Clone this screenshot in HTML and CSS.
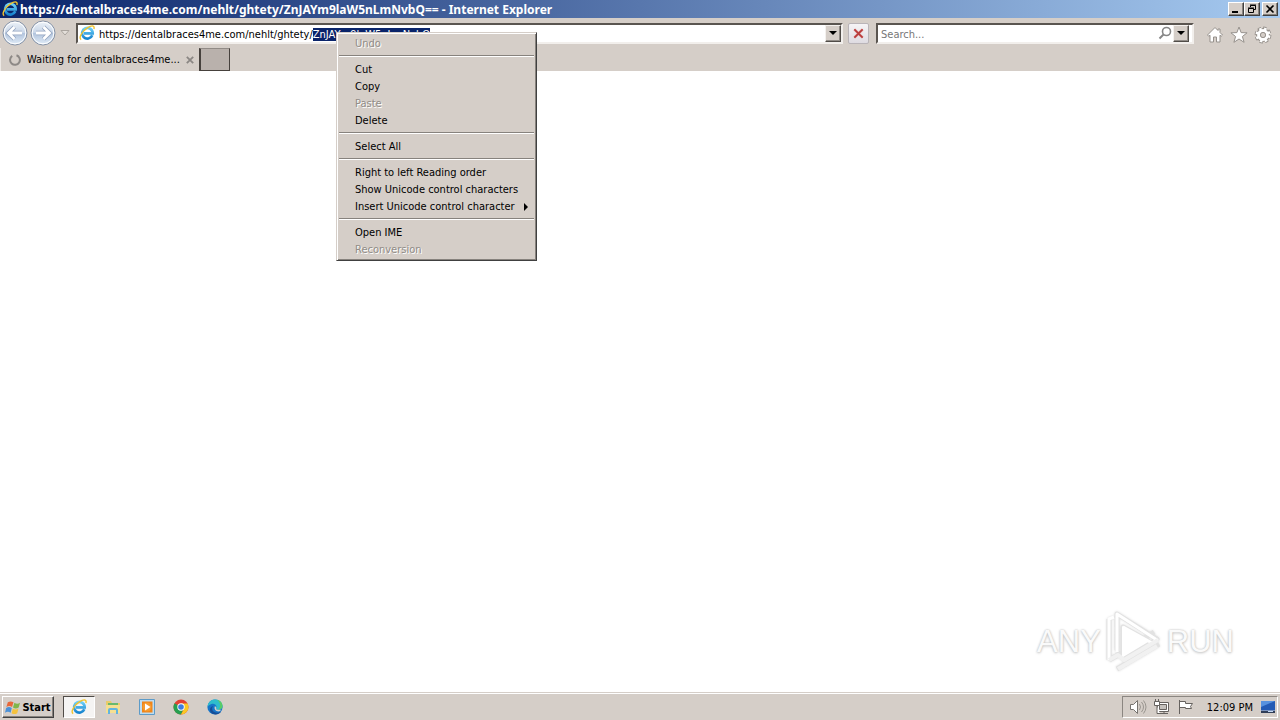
FILE: index.html
```html
<!DOCTYPE html>
<html lang="en">
<head>
<meta charset="utf-8">
<title>Internet Explorer</title>
<link rel="stylesheet" href="styles.css">
</head>
<body>
<svg class="defs" aria-hidden="true">
  <defs>
    <linearGradient id="ieBlue" x1="0" y1="0" x2="0" y2="1"><stop offset="0" stop-color="#6fd0f8"/><stop offset="1" stop-color="#1684cf"/></linearGradient>
    <linearGradient id="orb" x1="0" y1="0" x2="0" y2="1"><stop offset="0" stop-color="#eef3f9"/><stop offset=".48" stop-color="#c9d6e8"/><stop offset=".52" stop-color="#b3c5de"/><stop offset="1" stop-color="#e2edf8"/></linearGradient>
    <symbol id="ie" viewBox="0 0 16 16">
      <path d="M13.3 10.3A5.3 5.3 0 1 1 13.7 8.4H5" fill="none" stroke="url(#ieBlue)" stroke-width="2.7"/>
      <path d="M2.200 14.600C-.8 13 3 6.500 8 3.200S15.800.2 14.900 4" fill="none" stroke="#f3c32c" stroke-width="1.4"/>
    </symbol>
  </defs>
</svg>
<header class="titlebar">
  <svg class="ico16"><use href="#ie"/></svg>
  <h1 class="title">https://dentalbraces4me.com/nehlt/ghtety/ZnJAYm9laW5nLmNvbQ== - Internet Explorer</h1>
  <div class="winbtns">
    <button class="winbtn" aria-label="Minimize"><svg viewBox="0 0 12 10"><path d="M2 7h6v2H2z"/></svg></button>
    <button class="winbtn" aria-label="Restore"><svg viewBox="0 0 12 10"><path d="M4.500 3V1.500h5v4H8M4 1h6M2.500 4.500h5v4h-5zM2 4h6" fill="none" stroke="#000"/></svg></button>
    <button class="winbtn winclose" aria-label="Close"><svg viewBox="0 0 12 10"><path d="M2.500 1.500l7 7M9.500 1.500l-7 7" stroke="#000" stroke-width="1.600"/></svg></button>
  </div>
</header>
<nav class="navbar">
  <div class="history">
    <button class="orb" aria-label="Back"><svg viewBox="0 0 26 26"><circle cx="13" cy="13" r="12" fill="url(#orb)" stroke="#8793a6"/><circle cx="13" cy="13" r="10.800" fill="none" stroke="#fff"/><path d="M12.500 7L6.500 13l6 6M7 13h13" fill="none" stroke="#94a5c0" stroke-width="4.500"/><path d="M12.500 7L6.500 13l6 6M7 13h13" fill="none" stroke="#fff" stroke-width="2.800"/></svg></button>
    <button class="orb" aria-label="Forward"><svg viewBox="0 0 26 26"><circle cx="13" cy="13" r="12" fill="url(#orb)" stroke="#8793a6"/><circle cx="13" cy="13" r="10.800" fill="none" stroke="#fff"/><path d="M13.500 7l6 6-6 6M19 13H6" fill="none" stroke="#94a5c0" stroke-width="4.500"/><path d="M13.500 7l6 6-6 6M19 13H6" fill="none" stroke="#fff" stroke-width="2.800"/></svg></button>
    <button class="recent" aria-label="Recent pages"><svg viewBox="0 0 10 6"><path d="M1 .5h8L5 5z" fill="#e4dfda" stroke="#aaa49e"/></svg></button>
  </div>
  <div class="field address">
    <svg class="ico16"><use href="#ie"/></svg>
    <input id="url" class="entry" type="text" aria-label="Address" spellcheck="false" value="https://dentalbraces4me.com/nehlt/ghtety/ZnJAYm9laW5nLmNvbQ">
    <button class="drop" aria-label="Show address list"><svg viewBox="0 0 8 4"><path d="M0 0h8L4 4z"/></svg></button>
  </div>
  <button class="stop" aria-label="Stop"><svg viewBox="0 0 12 12"><path d="M1.500 1.500l9 9M10.500 1.500l-9 9" stroke="#d99" stroke-width="3"/><path d="M1.500 1.500l9 9M10.500 1.500l-9 9" stroke="#b83a3a" stroke-width="1.600"/></svg></button>
  <div class="field search">
    <input class="entry" type="text" aria-label="Search" placeholder="Search...">
    <button class="glass" aria-label="Search"><svg viewBox="0 0 14 14"><circle cx="8.500" cy="5.500" r="4" fill="none" stroke="#868686" stroke-width="1.600"/><path d="M5.500 8.500L1.500 12.500" stroke="#868686" stroke-width="2"/></svg></button>
    <button class="drop" aria-label="Search options"><svg viewBox="0 0 8 4"><path d="M0 0h8L4 4z"/></svg></button>
  </div>
  <div class="tools">
    <button class="tool" aria-label="Home"><svg viewBox="0 0 18 18"><path d="M9 1.500L1.500 9l1.300 1.300L4 9.200V16h3.500v-5h3v5H14V9.200l1.200 1.100L16.500 9 14 6.500V3h-2v1.500z" fill="#fff" stroke="#96918c"/></svg></button>
    <button class="tool" aria-label="Favorites"><svg viewBox="0 0 18 18"><path d="M9 1l2.100 5.600 6 .2-4.700 3.700 1.700 5.800L9 13l-5.100 3.300 1.700-5.800L.900 6.800l6-.2z" fill="#fff" stroke="#96918c"/></svg></button>
    <button class="tool" aria-label="Tools"><svg viewBox="0 0 18 18"><circle cx="9" cy="9" r="6.600" fill="none" stroke="#96918c" stroke-width="3.600" stroke-dasharray="3.200 1.980"/><circle cx="9" cy="9" r="4.600" fill="none" stroke="#96918c" stroke-width="5"/><circle cx="9" cy="9" r="6.300" fill="none" stroke="#fff" stroke-width="2.400" stroke-dasharray="2.400 2.548" stroke-dashoffset="-.4"/><circle cx="9" cy="9" r="4.400" fill="#d5cec8" stroke="#fff" stroke-width="3"/><circle cx="9" cy="9" r="2.600" fill="#d5cec8" stroke="#96918c"/></svg></button>
  </div>
</nav>
<div class="tabs">
  <div class="tab">
    <svg class="spinner" viewBox="0 0 12 12"><path d="M7.500 1.300A4.900 4.900 0 1 1 3.200 1.900" fill="none" stroke="#8d8986" stroke-width="2"/></svg>
    <span class="tabname">Waiting for dentalbraces4me...</span>
    <button class="tabclose" aria-label="Close tab"><svg viewBox="0 0 8 8"><path d="M.8.8l6.400 6.400M7.200.8L.8 7.200" stroke="#8b8784" stroke-width="1.800"/></svg></button>
  </div>
  <button class="newtab" aria-label="New tab"></button>
</div>
<main class="page">
  <div class="watermark">
    <span>ANY</span>
    <svg viewBox="0 0 58 64" fill="none" stroke-linejoin="round">
      <path d="M4 9v41M12 4v35L12 4l40 25-6 4M4 50l9-5 36-23M12 59l42-25M18 17v29l25-15z" stroke="#e2e2e2" stroke-width="5"/>
      <path d="M4 50V9l5-2M12 42V4l40 26-5 3L18 17" stroke="#fff" stroke-width="3"/>
      <path d="M18 17v29l25-15z" fill="#fff" stroke="#fff" stroke-width="2"/>
      <path d="M4 50l9-5 6 5 34-20M13 59l39-23" stroke="#f1f1f1" stroke-width="4"/>
    </svg>
    <span>RUN</span>
  </div>
</main>
<footer class="taskbar">
  <button class="start"><svg viewBox="0 0 17 17"><path d="M3 3q3-2 6 0L7.500 8q-3-2-6 0z" fill="#e8683a"/><path d="M10 3.500q3 2 6 0L14.500 8.500q-3 2-6 0z" fill="#80b64a"/><path d="M1.200 9q3-2 6 0L6 14q-3-2-6 0z" fill="#4b91d8"/><path d="M8.300 9.500q3 2 6 0L13 14.500q-3 2-6 0z" fill="#f4c23e"/></svg>Start</button>
  <div class="apps">
    <button class="app active" aria-label="Internet Explorer"><svg><use href="#ie"/></svg></button>
    <button class="app" aria-label="File Explorer"><svg viewBox="0 0 16 16"><path d="M1 2h5l1 2h8v9H1z" fill="#e9cc6b"/><path d="M3 4h10v3H3z" fill="#69b96d"/><path d="M1 6h14v8H1z" fill="#f5df91"/><path d="M3 15v-4q0-2 2-2h6q2 0 2 2v4h-2v-4H5v4z" fill="#62b4df"/></svg></button>
    <button class="app" aria-label="Media Player"><svg viewBox="0 0 16 16"><path d="M.5.5h15v15H.5z" fill="#bddcf0" stroke="#5d9bc8"/><path d="M3 2.500h10.500v11H3z" fill="#f08519"/><circle cx="8" cy="8" r="4.500" fill="#f59b2f"/><path d="M6 4.500L11.500 8 6 11.500z" fill="#fff"/></svg></button>
    <button class="app" aria-label="Chrome"><svg viewBox="0 0 16 16"><circle cx="8" cy="8" r="7.500" fill="#e34133"/><path d="M8 8L1.500 4.250A7.500 7.500 0 0 0 8 15.500L11 9z" fill="#279f50"/><path d="M8 4.500h6.600A7.500 7.500 0 0 1 8 15.500l3.200-6z" fill="#fbc924"/><circle cx="8" cy="8" r="3.700" fill="#fff"/><circle cx="8" cy="8" r="2.800" fill="#3f7de0"/></svg></button>
    <button class="app" aria-label="Edge"><svg viewBox="0 0 16 16"><circle cx="8" cy="8" r="7.600" fill="#1674c8"/><path d="M.5 8C1 2.500 5-.2 9 .5c4 .6 6.500 3.500 6.500 6.500 0 2.500-2 3.800-4.500 3.800-2 0-2-1-1.500-2C10 6 7 4 4.500 5 2 5.800.8 7 .5 8z" fill="#2fbdcc"/><path d="M10 .7c4 1 5.500 3.800 5.500 6.300 0 2.500-2 3.800-4.500 3.800 3-2 3-7-1-10.100z" fill="#58cc67"/><path d="M6 7c-3 5 2 8.500 8 5.700-3 4.500-11 3-11-2C3 8.500 4.500 7.300 6 7z" fill="#174d96"/><path d="M9.500 8.800c-.5 1-.5 2 1.500 2h3.300l-1.600 1.500C9 13 6.500 10 8 7z" fill="#d5cec8"/></svg></button>
  </div>
  <div class="tray">
    <svg viewBox="0 0 18 16" fill="none" stroke="#77736f"><path d="M1.500 5.500h3l4-4v13l-4-4h-3z" fill="#fff"/><path d="M10.500 5q2 3 0 6M12.500 3q4 5 0 10M14.500 1.500q5 6.500 0 13" stroke="#99958f"/></svg>
    <svg viewBox="0 0 18 16" fill="none" stroke="#66625f"><path d="M4.500 3.500h11v9h-11z" fill="#fff"/><path d="M6.500 5.500h7v5h-7z" fill="#c4c0bc"/><path d="M7 14.500h8M11 12.500v2"/><path d="M1.500 2.500h5v4h-5zM2.500 0v2M5.500 0v2M4 7v7.500h3" fill="#fff"/></svg>
    <svg viewBox="0 0 18 16" fill="none" stroke="#66625f"><path d="M2.500 2.500h6v2h7l-2 3 1 2h-6v-1h-6z" fill="#fff"/><path d="M2.500 1v14"/></svg>
    <time>12:09 PM</time>
    <svg class="desk" viewBox="0 0 18 16"><path d="M2 2h14v9.500H2z" fill="#235bb5"/><path d="M2 2h14L2 8z" fill="#5792df"/><path d="M2 12h14v2H2z" fill="#303e58"/><path d="M9 12h5v1H9z" fill="#c4d9f4"/></svg>
  </div>
</footer>
<div class="menu" role="menu">
  <button class="item" role="menuitem" disabled>Undo</button>
  <hr>
  <button class="item" role="menuitem">Cut</button>
  <button class="item" role="menuitem">Copy</button>
  <button class="item" role="menuitem" disabled>Paste</button>
  <button class="item" role="menuitem">Delete</button>
  <hr>
  <button class="item" role="menuitem">Select All</button>
  <hr>
  <button class="item" role="menuitem">Right to left Reading order</button>
  <button class="item" role="menuitem">Show Unicode control characters</button>
  <button class="item" role="menuitem">Insert Unicode control character<svg viewBox="0 0 4 8"><path d="M0 0l4 4-4 4z"/></svg></button>
  <hr>
  <button class="item" role="menuitem">Open IME</button>
  <button class="item" role="menuitem" disabled>Reconversion</button>
</div>
<script src="main.js"></script>
</body>
</html>
```
FILE: styles.css
```css
* { box-sizing: border-box; }
body {
  margin: 0;
  min-height: 100vh;
  display: flex;
  flex-direction: column;
  background: #fff;
  color: #000;
  font: 11px/17px "DejaVu Sans Condensed", "DejaVu Sans", sans-serif;
}
button, input { font: inherit; color: inherit; margin: 0; padding: 0; border: 0; background: none; }
button { display: flex; align-items: center; justify-content: center; flex-shrink: 0; }
svg { flex-shrink: 0; display: block; }
.defs { position: absolute; width: 0; height: 0; }
.ico16 { width: 16px; height: 16px; }

.titlebar {
  display: flex;
  align-items: center;
  gap: 2px;
  height: 18px;
  padding: 0 2px;
  background: linear-gradient(90deg, #0a246a, #a6caf0);
}
.title { flex: 1; margin: 0; font: bold 12px/17px "Noto Sans", sans-serif; color: #fff; white-space: nowrap; }
.winbtns { display: flex; }
.winbtn {
  width: 16px;
  height: 14px;
  background: #d5cec8;
  border: 1px solid;
  border-color: #fff #404040 #404040 #fff;
  box-shadow: inset -1px -1px #87827d;
}
.winbtn svg { width: 12px; height: 10px; }
.winclose { margin-left: 2px; }

.navbar { display: flex; align-items: center; height: 30px; background: #d5cec8; }
.history { display: flex; align-items: center; width: 76px; padding-left: 1px; }
.orb { width: 28px; height: 28px; }
.orb svg { width: 26px; height: 26px; }
.recent { width: 15px; height: 20px; }
.recent svg { width: 10px; height: 6px; }
.field {
  display: flex;
  align-items: center;
  height: 21px;
  background: #fff;
  border: 2px solid;
  border-color: #5a5550 #f2efec #f2efec #5a5550;
}
.address { flex: 1; padding-left: 1px; gap: 4px; }
.entry { flex: 1; min-width: 0; height: 17px; padding-top: 2px; line-height: 14px; outline: 0; }
.entry::selection { background: #0a246a; color: #fff; }
.entry::placeholder { color: #777; opacity: 1; }
.drop {
  width: 16px;
  height: 17px;
  background: #d5cec8;
  border: 1px solid;
  border-color: #f4f1ee #504c48 #504c48 #f4f1ee;
  box-shadow: inset -1px -1px #918c87;
}
.drop svg { width: 8px; height: 4px; }
.stop { width: 21px; height: 21px; margin: 0 7px 0 5px; border: 1px solid #b9b4b8; border-radius: 2px; background: linear-gradient(#f6f4f6, #dedbe1); }
.stop svg { width: 11px; height: 11px; }
.search { width: calc(25% - 2px); padding-left: 3px; padding-right: 3px; }
.glass { width: 16px; height: 17px; }
.glass svg { width: 14px; height: 14px; }
.tools { display: flex; gap: 6px; padding: 3px 8px 0 12px; }
.tool svg { width: 18px; height: 18px; }

.tabs { display: flex; height: 23px; background: #d5cec8; }
.tab { display: flex; align-items: center; gap: 6px; width: 199px; padding: 0 7px 0 8px; border-left: 1px solid #eeeae6; }
.spinner { width: 12px; height: 12px; }
.tabname { flex: 1; white-space: nowrap; }
.tabclose svg { width: 8px; height: 8px; }
.newtab { width: 31px; height: 23px; background: #b9b1ac; border: 1px solid #46413d; border-width: 1px 1px 1px 2px; border-top-color: #918b86; }

.page { flex: 1; display: flex; align-items: flex-end; justify-content: flex-end; padding: 0 46px 18px; }
.watermark {
  display: flex;
  align-items: center;
  gap: 4px;
  color: #fafafa;
  font: 31px/64px "Liberation Sans", sans-serif;
  text-shadow: 0 0 2px #bbb, 0 1px 3px #ccc;
}
.watermark svg { width: 58px; height: 64px; filter: drop-shadow(0 0 1px #ddd); }

.taskbar {
  display: flex;
  align-items: center;
  height: 28px;
  padding: 2px 2px 1px;
  background: #d5cec8;
  border-top: 1px solid #d5cec8;
  box-shadow: inset 0 1px #fff;
}
.start {
  width: 52px;
  height: 22px;
  gap: 1px;
  font-weight: bold;
  border: 1px solid;
  border-color: #fff #404040 #404040 #fff;
  box-shadow: inset -1px -1px #87827d;
}
.start svg { width: 16px; height: 17px; }
.apps { display: flex; flex: 1; gap: 2px; padding-left: 9px; }
.app { width: 32px; height: 22px; }
.app svg { width: 16px; height: 16px; }
.active { background: #f5f4f3; border: 1px solid; border-color: #504c48 #fff #fff #504c48; }
.tray {
  display: flex;
  align-items: center;
  gap: 6px;
  height: 22px;
  padding: 0 0 0 6px;
  border: 1px solid;
  border-color: #8b8681 #fff #fff #8b8681;
}
.tray svg { width: 18px; height: 16px; }
.tray time { padding: 0 0 0 6px; white-space: nowrap; }

.menu {
  position: absolute;
  left: 336px;
  top: 32px;
  width: 201px;
  padding: 2px 1px;
  background: #d5cec8;
  border: 1px solid;
  border-color: #d5cec8 #404040 #404040 #d5cec8;
  box-shadow: inset 1px 1px #fff, inset -1px -1px #87827d;
}
.item { width: 100%; height: 17px; justify-content: space-between; padding: 0 7px 0 17px; white-space: nowrap; }
.item:disabled { color: #918c87; text-shadow: 1px 1px #fff; }
.item svg { width: 4px; height: 8px; }
.menu hr { height: 2px; margin: 3px 1px 4px; border: 0; border-top: 1px solid #87827d; border-bottom: 1px solid #fff; }
```
FILE: main.js
```js
const url = document.getElementById('url');
url.focus();
url.setSelectionRange(url.value.lastIndexOf('/') + 1, url.value.length);
```
